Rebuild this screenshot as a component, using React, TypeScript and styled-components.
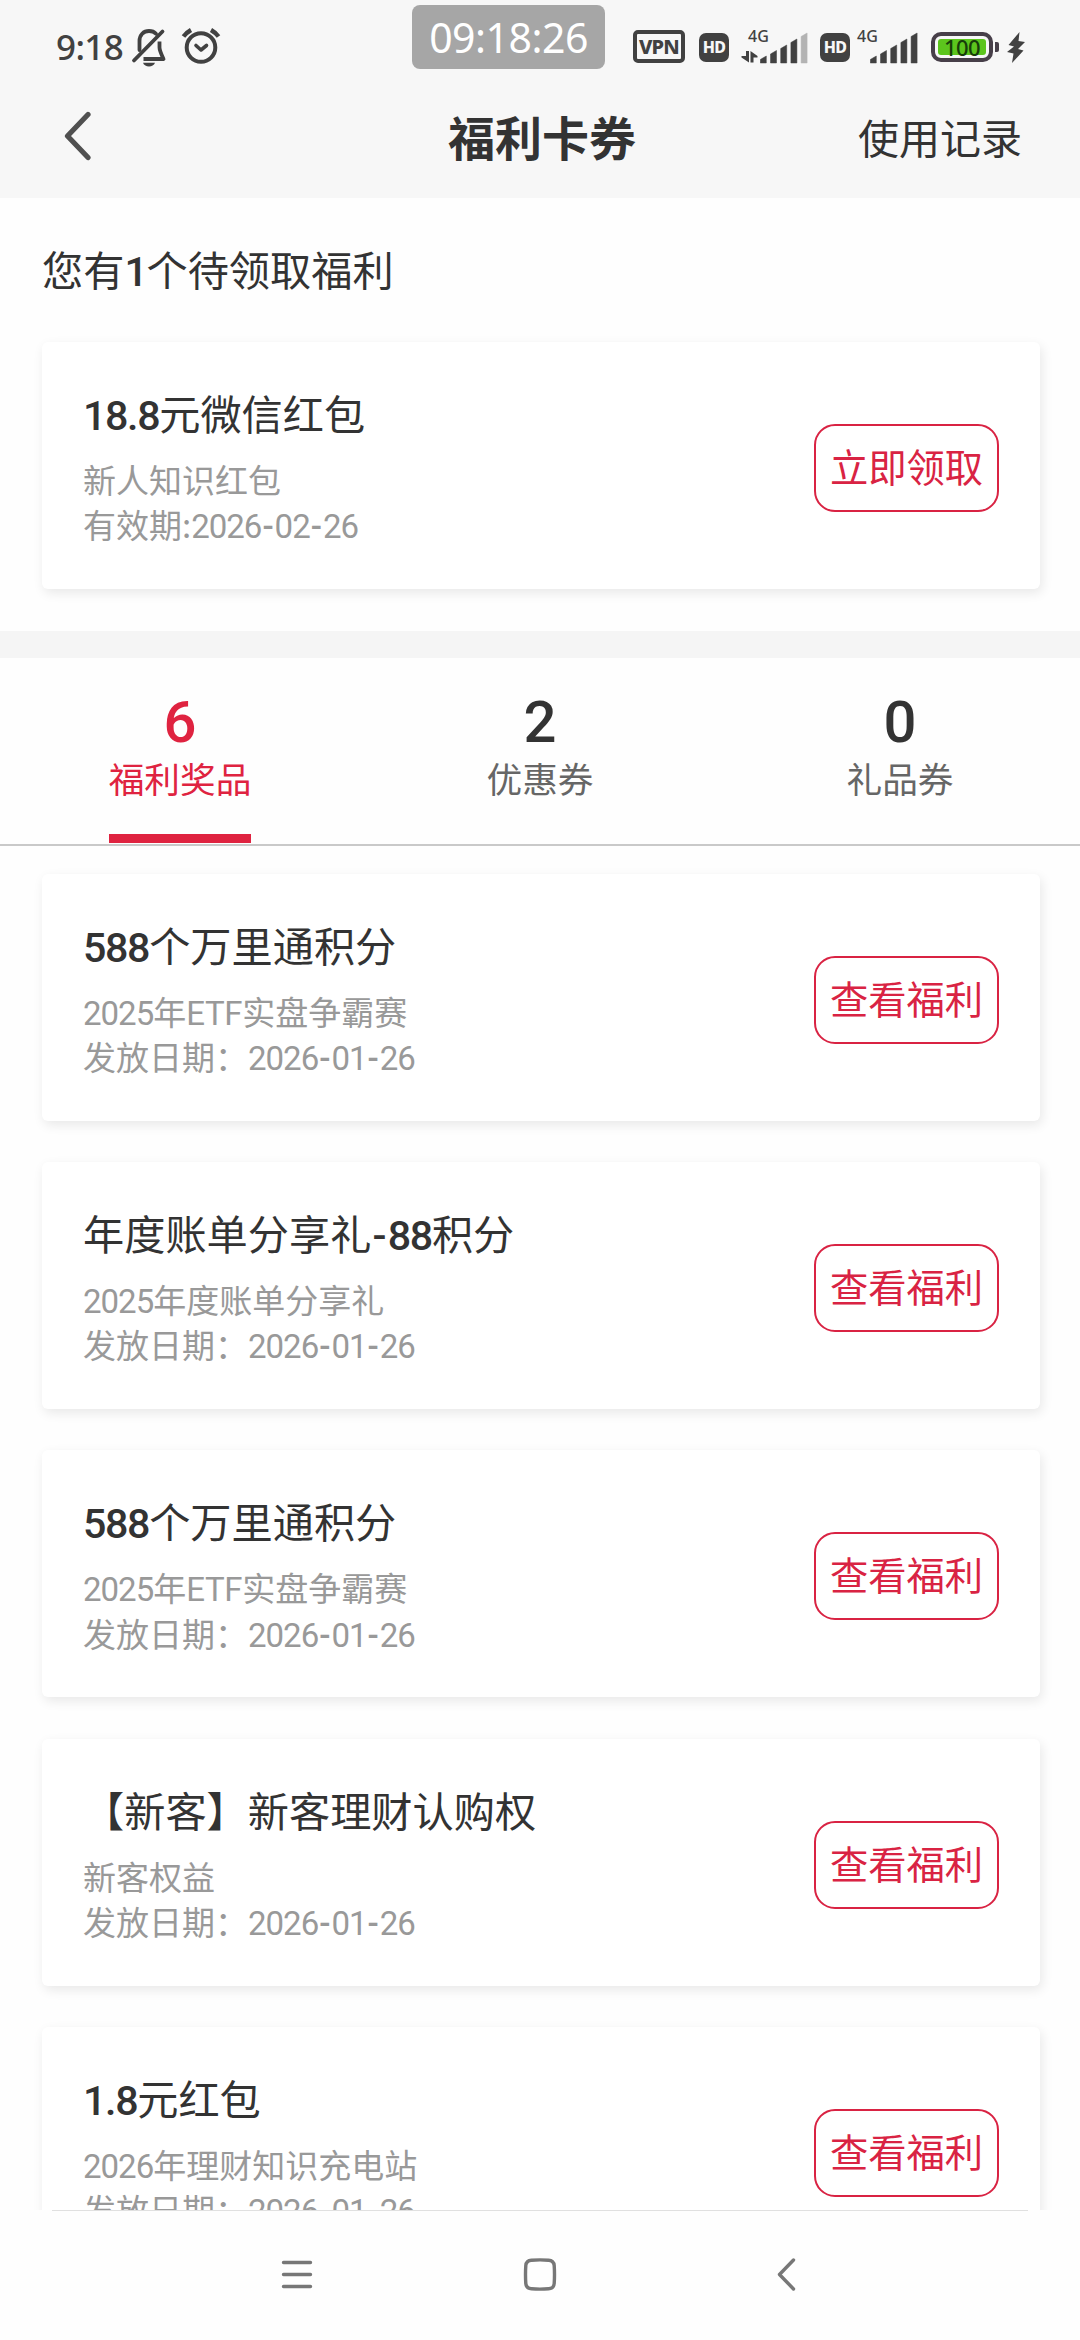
import React from "react";
import styled, { createGlobalStyle } from "styled-components";

const CJK = '"Noto Sans CJK SC", "Noto Sans", sans-serif';
const LATIN = 'Roboto, "Noto Sans CJK SC", sans-serif';
const STATUS = '"Noto Sans", "Open Sans", sans-serif';
const RED = "#d92343";

const GlobalStyle = createGlobalStyle`
  *, *::before, *::after { box-sizing: border-box; }
  html, body { margin: 0; padding: 0; background: #fefefe; }
`;

const Screen = styled.div`
  display: flex;
  flex-direction: column;
  width: 1080px;
  height: 2340px;
  overflow: hidden;
  background: #fefefe;
  color: #333;
  font-family: ${CJK};
`;

const Header = styled.header`
  flex: none;
  height: 198px;
  background: #f7f7f7;
`;

const StatusBar = styled.div`
  display: flex;
  align-items: flex-start;
  height: 80px;
  padding-left: 56px;
  color: #414141;
  font-family: ${STATUS};
`;

const StatusItem = styled.div<{ $left?: number; $top: number }>`
  flex: none;
  display: flex;
  margin: ${(p) => p.$top}px 0 0 ${(p) => p.$left ?? 0}px;
`;

const StatusTime = styled.span`
  width: 67px;
  font-size: 35px;
  font-weight: 500;
  line-height: 40px;
  letter-spacing: -0.6px;
  white-space: nowrap;
`;

const ClockPill = styled.div`
  width: 193px;
  height: 64px;
  border-radius: 8px;
  background: #a6a6a6;
  color: #fff;
  font-size: 41px;
  line-height: 65px;
  letter-spacing: -0.5px;
  text-align: center;
`;

const VpnBadge = styled.div`
  width: 52px;
  height: 33px;
  border: 4px solid #414141;
  border-radius: 5px;
  font-size: 20px;
  font-weight: 800;
  line-height: 25px;
  letter-spacing: -0.8px;
  text-align: center;
`;

const HdBadge = styled.div`
  width: 30px;
  height: 29px;
  border-radius: 7px;
  background: #414141;
  color: #f7f7f7;
  font-size: 16px;
  font-weight: 800;
  line-height: 29px;
  letter-spacing: -0.8px;
  text-align: center;
`;

const Battery = styled.div`
  display: flex;
  align-items: center;
  gap: 2px;
`;

const BatteryBody = styled.div`
  width: 62px;
  height: 30px;
  padding: 3px;
  border: 4px solid #473f49;
  border-radius: 10px;
`;

const BatteryFill = styled.div`
  height: 16px;
  border-radius: 3px;
  background: #5cc51d;
  color: #173d0a;
  font-size: 22px;
  font-weight: 500;
  line-height: 16px;
  letter-spacing: -0.6px;
  text-align: center;
`;

const BatteryNub = styled.div`
  width: 4px;
  height: 10px;
  border-radius: 0 2px 2px 0;
  background: #473f49;
`;

const NavBar = styled.div`
  display: grid;
  grid-template-columns: 1fr auto 1fr;
  align-items: center;
  height: 112px;
  padding: 0 58px 0 62px;
`;

const PageTitle = styled.h1`
  margin: 0;
  font-size: 47px;
  font-weight: 700;
  line-height: 66px;
`;

const RecordLink = styled.span`
  justify-self: end;
  font-size: 41px;
  line-height: 60px;
`;

const Content = styled.main`
  flex: none;
  height: 2012px;
  overflow: hidden;
`;

const Pending = styled.section`
  height: 433px;
  padding: 40px 40px 0 42px;
`;

const PendingHeading = styled.h2`
  margin: 0 0 44px;
  font-size: 41.2px;
  font-weight: 400;
  line-height: 60px;
`;

const Card = styled.article`
  flex: none;
  display: flex;
  justify-content: space-between;
  height: 247px;
  padding: 41px 41px 0 41px;
  border-radius: 6px;
  background: #fff;
  box-shadow: 2px 4px 12px rgba(0, 0, 0, 0.09);
`;

const CardTitle = styled.h3`
  margin: 0 0 16px;
  font-size: 41.2px;
  font-weight: 400;
  line-height: 58px;
  white-space: nowrap;
`;

const CardMeta = styled.p`
  margin: 0;
  color: #999;
  font-size: 33px;
  line-height: 45.3px;
  white-space: nowrap;
`;

const ActionButton = styled.button`
  width: 185px;
  height: 88px;
  margin: 41px 0 0;
  padding: 0 0 4px;
  border: 2px solid ${RED};
  border-radius: 21px;
  background: transparent;
  color: ${RED};
  font-family: ${CJK};
  font-size: 38.3px;
  line-height: 56px;
  white-space: nowrap;
`;

const Divider = styled.div`
  height: 27px;
  background: #f5f5f5;
`;

const Tabs = styled.div`
  display: grid;
  grid-template-columns: repeat(3, 1fr);
  height: 188px;
  border-bottom: 2px solid #c9c9c9;
`;

const Tab = styled.div<{ $active?: boolean }>`
  display: flex;
  flex-direction: column;
  align-items: center;
  justify-self: center;
  height: 185px;
  padding-top: 33px;
  border-bottom: 9px solid ${(p) => (p.$active ? "#df2340" : "transparent")};
  color: ${(p) => (p.$active ? "#df2340" : "#333")};
`;

const TabCount = styled.span`
  font-family: ${LATIN};
  font-size: 58px;
  font-weight: 500;
  line-height: 62px;
`;

const TabLabel = styled.span<{ $active?: boolean }>`
  color: ${(p) => (p.$active ? "#df2340" : "#666")};
  font-size: 35.7px;
  line-height: 50px;
`;

const List = styled.section`
  display: flex;
  flex-direction: column;
  gap: 41.4px;
  padding: 27.6px 40px 0 42px;
`;

const Digits = styled.span`
  font-family: ${LATIN};
  font-weight: 500;
  line-height: 0;
  letter-spacing: -0.033em;

  ${CardMeta} & {
    font-weight: 400;
    letter-spacing: -0.03em;
  }
`;

const Hyphen = styled.span`
  display: inline-block;
  width: 0.4em;
  font-family: ${LATIN};
  font-weight: 500;
  line-height: 0;
  text-align: center;
`;

const Letters = styled.span`
  font-family: ${LATIN};
  line-height: 0;
  letter-spacing: -0.01em;
`;

const SystemNav = styled.nav`
  flex: none;
  display: flex;
  align-items: flex-start;
  height: 130px;
  padding: 0 0 0 280px;
  background: linear-gradient(#e0e0e0, #e0e0e0) 52px 0 / 976px 1px no-repeat #fefefe;
`;

const NavIcon = styled.div<{ $left?: number }>`
  display: flex;
  margin: 46px 0 0 ${(p) => p.$left ?? 0}px;
`;

/** Splits mixed text so figures, hyphens and Latin letters get their own face. */
function Mixed({ children }: { children: string }) {
  const runs = children.match(/[0-9.]+|-|[A-Za-z]+|[^0-9.\-A-Za-z]+/g) ?? [];
  return (
    <>
      {runs.map((run, i) => {
        if (run === "-") return <Hyphen key={i}>-</Hyphen>;
        if (/^[0-9.]/.test(run)) return <Digits key={i}>{run}</Digits>;
        if (/^[A-Za-z]/.test(run)) return <Letters key={i}>{run}</Letters>;
        return <React.Fragment key={i}>{run}</React.Fragment>;
      })}
    </>
  );
}

function BellOff() {
  return (
    <svg width="36" height="40" viewBox="0 0 36 40" fill="none" stroke="#414141" strokeWidth="3.8" strokeLinecap="round" strokeLinejoin="round">
      <path d="M8.500 23V14C8.500 8 12.500 4 18 4c3 0 5.400 1 7 2.800" />
      <path d="M3 33.500L31.500 4.500" />
      <path d="M28.500 14.500v6c0 3 1.200 5.500 4 11.500H12.500" strokeLinecap="butt" />
      <path d="M12 35.800h12c-1 2.600-3.300 3.700-6 3.700s-5-1.100-6-3.700z" fill="#414141" stroke="none" />
    </svg>
  );
}

function Alarm() {
  return (
    <svg width="40" height="38" viewBox="0 0 40 38" fill="none" stroke="#414141" strokeWidth="4" strokeLinecap="round" strokeLinejoin="round">
      <circle cx="20" cy="20.500" r="14.300" />
      <path d="M15 18.500l5 4.500 5.500-4.500" strokeWidth="3.600" />
      <path d="M2.500 9.500Q5.500 5.500 10 3M37.500 9.500Q34.500 5.500 30 3" strokeLinecap="butt" strokeWidth="4.400" />
    </svg>
  );
}

function Signal({ dimLast = false }: { dimLast?: boolean }) {
  const tops = [24, 18.5, 13, 7, 1];
  return (
    <svg width="48" height="32" viewBox="0 0 48 32">
      {tops.map((top, i) => {
        const x = 0.3 + i * 10.2;
        const color = dimLast && i === 4 ? "#b3b3b3" : "#414141";
        return (
          <path
            key={top}
            d={`M${x} 31V${top + 3.5}L${x + 6} ${top}V31z`}
            fill={color}
            stroke={color}
            strokeWidth="0.5"
            strokeLinejoin="round"
          />
        );
      })}
    </svg>
  );
}

const NetworkBox = styled.div<{ $width: number }>`
  display: flex;
  flex-direction: column;
  align-items: flex-start;
  width: ${(p) => p.$width}px;
`;

const NetworkLabel = styled.span<{ $indent?: number }>`
  margin-left: ${(p) => p.$indent ?? 0}px;
  font-size: 16px;
  font-weight: 500;
  line-height: 19px;
`;

function DataArrows() {
  return (
    <svg width="17" height="12" viewBox="0 0 17 12" fill="#414141">
      <path d="M5 0h3v11.500L0.500 6.500V5H5z" />
      <path d="M9.500 11.500V0L16.500 5v1.500h-4v5z" />
    </svg>
  );
}

interface Benefit {
  title: string;
  source: string;
  date: string;
  action: string;
}

const pending: Benefit = {
  title: "18.8元微信红包",
  source: "新人知识红包",
  date: "有效期:2026-02-26",
  action: "立即领取",
};

const issued = "发放日期：2026-01-26";
const benefits: Benefit[] = [
  { title: "588个万里通积分", source: "2025年ETF实盘争霸赛", date: issued, action: "查看福利" },
  { title: "年度账单分享礼-88积分", source: "2025年度账单分享礼", date: issued, action: "查看福利" },
  { title: "588个万里通积分", source: "2025年ETF实盘争霸赛", date: issued, action: "查看福利" },
  { title: "【新客】新客理财认购权", source: "新客权益", date: issued, action: "查看福利" },
  { title: "1.8元红包", source: "2026年理财知识充电站", date: issued, action: "查看福利" },
];

const tabs = [
  { count: "6", label: "福利奖品", active: true },
  { count: "2", label: "优惠券" },
  { count: "0", label: "礼品券" },
];

function BenefitCard({ item }: { item: Benefit }) {
  return (
    <Card>
      <div>
        <CardTitle><Mixed>{item.title}</Mixed></CardTitle>
        <CardMeta><Mixed>{item.source}</Mixed></CardMeta>
        <CardMeta><Mixed>{item.date}</Mixed></CardMeta>
      </div>
      <ActionButton>{item.action}</ActionButton>
    </Card>
  );
}

export default function App() {
  return (
    <Screen lang="zh-CN">
      <GlobalStyle />
      <Header>
        <StatusBar>
          <StatusItem $top={27}><StatusTime>9:18</StatusTime></StatusItem>
          <StatusItem $left={8} $top={27}><BellOff /></StatusItem>
          <StatusItem $left={14} $top={27}><Alarm /></StatusItem>
          <StatusItem $left={191} $top={5}><ClockPill>09:18:26</ClockPill></StatusItem>
          <StatusItem $left={28} $top={30}><VpnBadge>VPN</VpnBadge></StatusItem>
          <StatusItem $left={14} $top={33}><HdBadge>HD</HdBadge></StatusItem>
          <StatusItem $left={12} $top={27}>
            <NetworkBox $width={19}>
              <NetworkLabel $indent={7}>4G</NetworkLabel>
              <StatusItem $top={5}><DataArrows /></StatusItem>
            </NetworkBox>
          </StatusItem>
          <StatusItem $top={32}><Signal dimLast /></StatusItem>
          <StatusItem $left={12} $top={33}><HdBadge>HD</HdBadge></StatusItem>
          <StatusItem $left={7} $top={27}>
            <NetworkBox $width={13}><NetworkLabel>4G</NetworkLabel></NetworkBox>
          </StatusItem>
          <StatusItem $top={32}><Signal /></StatusItem>
          <StatusItem $left={13} $top={32}>
            <Battery>
              <BatteryBody><BatteryFill>100</BatteryFill></BatteryBody>
              <BatteryNub />
            </Battery>
          </StatusItem>
          <StatusItem $left={8} $top={32}>
            <svg width="18" height="32" viewBox="0 0 18 32" fill="#414141">
              <path d="M12.500 0L1.500 13l5.500 1.500L0 20l6.500 1.500L5 31 16.500 18.500 11 17l7-7-6.500-1z" />
            </svg>
          </StatusItem>
        </StatusBar>
        <NavBar>
          <svg width="30" height="50" viewBox="0 0 30 50" fill="none" stroke="#505050" strokeWidth="5.200" strokeLinecap="round" strokeLinejoin="round">
            <path d="M26 3.500L5.500 25l20.500 21.500" />
          </svg>
          <PageTitle>福利卡券</PageTitle>
          <RecordLink>使用记录</RecordLink>
        </NavBar>
      </Header>

      <Content>
        <Pending>
          <PendingHeading><Mixed>您有1个待领取福利</Mixed></PendingHeading>
          <BenefitCard item={pending} />
        </Pending>
        <Divider />
        <Tabs>
          {tabs.map((t) => (
            <Tab key={t.label} $active={t.active}>
              <TabCount>{t.count}</TabCount>
              <TabLabel $active={t.active}>{t.label}</TabLabel>
            </Tab>
          ))}
        </Tabs>
        <List>
          {benefits.map((b, i) => (
            <BenefitCard key={i} item={b} />
          ))}
        </List>
      </Content>

      <SystemNav>
        <NavIcon>
          <svg width="34" height="36" viewBox="0 0 34 36" stroke="#777" strokeWidth="3.400" strokeLinecap="round">
            <path d="M3.500 6.500h27M3.500 18.500h27M3.500 30.500h27" />
          </svg>
        </NavIcon>
        <NavIcon $left={208}>
          <svg width="36" height="36" viewBox="0 0 36 36" fill="none" stroke="#777" strokeWidth="3.400">
            <path d="M9.500 4.200Q18 3.600 26.500 4.200Q31.800 4.600 32.200 9.500Q32.800 18.500 32.200 27.500Q31.800 32.400 26.500 32.800Q18 33.400 9.500 32.800Q4.200 32.400 3.800 27.500Q3.200 18.500 3.800 9.500Q4.200 4.600 9.500 4.200z" />
          </svg>
        </NavIcon>
        <NavIcon $left={217}>
          <svg width="24" height="38" viewBox="0 0 24 38" fill="none" stroke="#777" strokeWidth="3.400" strokeLinecap="round" strokeLinejoin="round">
            <path d="M18.500 4L4.500 18.500l14 14.500" />
          </svg>
        </NavIcon>
      </SystemNav>
    </Screen>
  );
}
